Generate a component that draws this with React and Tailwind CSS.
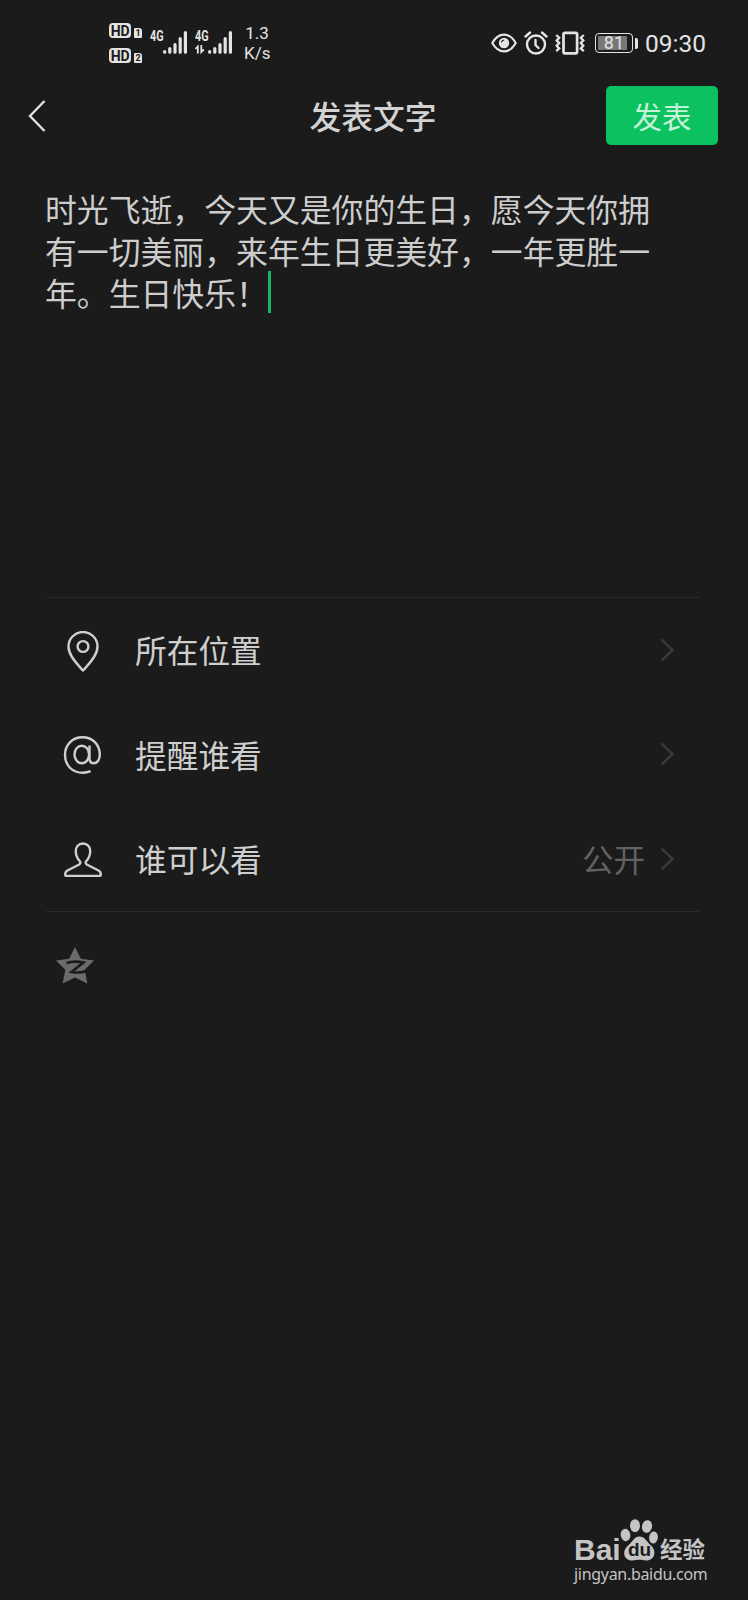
import React from 'react';
import clsx from 'clsx';

function HdBadge({ sim }) {
  return (
    <div className="flex h-[15px] items-end gap-[3px]">
      <span className="flex h-[15px] w-[22px] items-center justify-center rounded-[4px] bg-[#e4e4e4] text-[14px] font-bold leading-none tracking-[-0.3px] text-[#1b1b1b]">
        HD
      </span>
      <span className="flex h-[10px] w-[8px] items-center justify-center rounded-[1px] rounded-tr-[3px] bg-[#e4e4e4] text-[9px] font-bold leading-none text-[#1b1b1b]">
        {sim}
      </span>
    </div>
  );
}

function Signal({ data }) {
  return (
    <div className="relative h-[24px] w-[38px]">
      <svg viewBox="0 0 38 24" className="h-[24px] w-[38px]" fill="none" stroke="#e4e4e4" strokeWidth="3.2" strokeLinecap="round">
        <path d="M14.700 21.500v.7M19.800 18.500v3.700M25 14.500v7.700M30.200 8.500v13.700M35.400 2.500v19.700" />
        {data && (
          <path d="M.5 19l2.300-2.500v7M6.300 15v7l2.500-2.500" strokeWidth="1.800" strokeLinecap="butt" />
        )}
      </svg>
      <span className="absolute left-0 top-0 origin-left scale-x-[.72] text-[15px] font-bold leading-[12px] text-[#e4e4e4]">
        4G
      </span>
    </div>
  );
}

function StatusBar() {
  return (
    <div className="flex h-[86px] items-start justify-between pl-[109px] pr-[42px] font-[Roboto,sans-serif] text-[#e4e4e4]">
      <div className="flex items-start pt-[23px]">
        <div className="flex flex-col gap-[10px]">
          <HdBadge sim="1" />
          <HdBadge sim="2" />
        </div>
        <div className="ml-[8px] mt-[7px] flex gap-[7px]">
          <Signal />
          <Signal data />
        </div>
        <div className="ml-[11px] w-[26px] whitespace-nowrap text-center text-[17px] leading-[20px]">
          <div>1.3</div>
          <div>K/s</div>
        </div>
      </div>

      <div className="flex h-[22px] items-center mt-[32px]">
        <svg viewBox="0 0 26 20" className="h-[20px] w-[26px]" fill="none" stroke="#e4e4e4" strokeWidth="2.200">
          <path d="M1.300 10C4 5.200 8 1.600 13 1.600S22 5.200 24.700 10C22 14.800 18 18.400 13 18.400S4 14.800 1.300 10z" strokeLinejoin="round" />
          <circle cx="13" cy="10" r="5.200" fill="#e4e4e4" stroke="none" />
          <path d="M10.500 9.500a3 3 0 0 1 2.700-2.500" stroke="#1b1b1b" strokeWidth="1.200" />
        </svg>
        <svg viewBox="0 0 24 24" className="ml-[7px] h-[24px] w-[24px]" fill="none" stroke="#e4e4e4" strokeWidth="2.400" strokeLinecap="round">
          <circle cx="12" cy="13.500" r="9" />
          <path d="M1.500 5.500L6 1.500M18 1.500l4.500 4M11.500 9v5l3 3" />
        </svg>
        <svg viewBox="0 0 30 24" className="ml-[7px] h-[24px] w-[30px]" fill="none" stroke="#e4e4e4" strokeWidth="2.700">
          <rect x="8.500" y="1.900" width="13.600" height="20.400" rx="1.500" />
          <path d="M1.200 4l3 2.700-2.500 2.700 2.500 2.600-2.500 2.700 2.500 2.700-3 2.700M28.800 4l-3 2.700 2.500 2.700-2.500 2.600 2.500 2.700-2.500 2.700 3 2.700" strokeWidth="2.300" />
        </svg>
        <div className="ml-[10px] flex h-[20px] w-[38px] rounded-[4px] border-[1.500px] border-[#e4e4e4] p-[2px]">
          <div className="relative flex w-full items-center justify-center">
            <div className="absolute inset-y-0 left-0 w-[90%] bg-[#777777]" />
            <span className="relative text-[18px] leading-none">81</span>
          </div>
        </div>
        <div className="ml-[2px] h-[11px] w-[3px] rounded-r-[2px] bg-[#e4e4e4]" />
        <span className="ml-[7px] mt-[2px] text-[24.500px] leading-none">09:30</span>
      </div>
    </div>
  );
}

function Header() {
  return (
    <div className="flex h-[59px] items-center justify-between pl-[28px] pr-[30px]">
      <div className="w-[112px]">
        <svg viewBox="0 0 18 32" className="h-[32px] w-[18px]" fill="none" stroke="#e0e0e0" strokeWidth="2.400">
          <path d="M16.500 1L2 16l14.500 15" />
        </svg>
      </div>
      <h1 className="text-[31.800px] font-medium leading-none text-[#d2d2d2]">发表文字</h1>
      <button className="h-[59px] w-[112px] rounded-[5px] bg-[#0bc160] text-[29.500px] leading-none text-[#c4f3d8]">
        发表
      </button>
    </div>
  );
}

const icons = {
  pin: (
    <>
      <path d="M20 39.500C15 34 5.500 25 5.500 15.500a14.500 14.500 0 0 1 29 0C34.500 25 25 34 20 39.500z" />
      <circle cx="20" cy="15.500" r="5.400" />
    </>
  ),
  at: (
    <>
      <ellipse cx="18.800" cy="19.500" rx="7.300" ry="8.800" />
      <path d="M26.500 10.500v12.500c0 3.500 1.500 5.300 4.200 5.300 3.700 0 6.100-3.800 6.100-8.600C36.800 9.500 29.500 2.300 19.500 2.300 9.300 2.300 2 9.800 2 20s7.300 17.800 17.800 17.800c3 0 5.500-.5 7.800-1.600" />
    </>
  ),
  user: (
    <path d="M20 4.500c-4.600 0-7.200 3.300-7.200 8 0 3.700 1.500 7 4 9.700.9 1.200.7 2.600-.6 3.300L4.500 31.500c-2 1.100-2.300 2.300-2.300 4 0 .9.600 1.400 1.400 1.400h32.800c.8 0 1.400-.5 1.400-1.400 0-1.700-.3-2.900-2.300-4l-11.700-6c-1.300-.7-1.500-2.100-.6-3.300 2.500-2.700 4-6 4-9.700C27.200 7.800 24.600 4.500 20 4.500z" />
  ),
};

const rows = [
  { icon: 'pin', label: '所在位置' },
  { icon: 'at', label: '提醒谁看' },
  { icon: 'user', label: '谁可以看', value: '公开' },
];

function Row({ icon, label, value }) {
  return (
    <div className="flex flex-1 items-center pl-[17px] pr-[25px]">
      <svg viewBox="0 0 40 42" className="mt-[3px] h-[42px] w-[40px]" fill="none" stroke="#cfcfcf" strokeWidth="2.400" strokeLinejoin="round">
        {icons[icon]}
      </svg>
      <span className="ml-[32px] text-[31.700px] leading-none text-[#cfcfcf]">{label}</span>
      {value && <span className="ml-auto text-[31.500px] leading-none text-[#626262]">{value}</span>}
      <svg
        viewBox="0 0 14 24"
        className={clsx('h-[24px] w-[14px]', value ? 'ml-[15px]' : 'ml-auto')}
        fill="none"
        stroke="#3c3c3c"
        strokeWidth="2.400"
      >
        <path d="M1.500 1.500L12.500 12 1.500 22.500" />
      </svg>
    </div>
  );
}

function Watermark() {
  return (
    <div className="flex w-[134px] flex-col text-[#c4c4c4]">
      <div className="flex h-[41px] items-end">
        <span className="w-[46px] font-[Liberation_Sans,sans-serif] text-[30px] font-bold leading-[23px]">Bai</span>
        <div className="relative h-[42px] w-[38px]">
          <svg viewBox="0 0 38 42" className="h-[42px] w-[38px]" fill="#c4c4c4">
            <ellipse cx="5.500" cy="16" rx="4.800" ry="6.200" transform="rotate(-10 5.500 16)" />
            <ellipse cx="15" cy="6.700" rx="5" ry="6.500" />
            <ellipse cx="27" cy="7.500" rx="5" ry="6.400" transform="rotate(12 27 7.500)" />
            <ellipse cx="33.500" cy="18.500" rx="4.400" ry="6" transform="rotate(8 33.500 18.500)" />
            <path d="M19.500 17.500c5 0 7 4.500 10.500 8 3.500 3.200 5 6 4.300 9.500-.7 4.300-4 6.500-8 6.500-3 0-4.300-.7-6.800-.7s-4.300.7-7.300.7c-4.500 0-7.500-2.500-8-6.500-.4-3.500 1.500-6.500 5-9.500 3.800-3.500 5.300-8 10.300-8z" />
          </svg>
          <span className="absolute left-[8px] top-[23px] font-[Liberation_Sans,sans-serif] text-[19px] font-bold leading-[16px] text-[#1b1b1b]">
            du
          </span>
        </div>
        <span className="ml-[2px] whitespace-nowrap text-[22.500px] font-bold leading-[25px]">经验</span>
      </div>
      <span className="mt-px font-[Noto_Sans,sans-serif] text-[16px] leading-[24px] tracking-[-0.300px]">jingyan.baidu.com</span>
    </div>
  );
}

export default function App() {
  return (
    <div className="flex h-[1600px] w-[748px] flex-col bg-[#1b1b1b] font-[Noto_Sans_CJK_SC,sans-serif]">
      <StatusBar />
      <Header />

      <div className="h-[452px] pl-[45px] pt-[42px]">
        <p className="whitespace-nowrap text-[31.850px] leading-[42px] text-[#cdcdcd]">
          时光飞逝，今天又是你的生日，愿今天你拥
          <br />
          有一切美丽，来年生日更美好，一年更胜一
          <br />
          年。生日快乐！
          <span className="inline-block h-[42px] w-[3px] bg-[#14b866] align-top" />
        </p>
      </div>

      <div className="ml-[46px] mr-[49px] flex h-[315px] flex-col border-y border-[#2b2b2b]">
        {rows.map((row) => (
          <Row key={row.icon} {...row} />
        ))}
      </div>

      <svg viewBox="0 0 38 37" className="ml-[56px] mt-[35px] h-[37px] w-[38px]">
        <path
          d="M19 0l5.800 11.800L38 13.500l-9.300 9.200L31.300 36.500 19 30.500l-12.300 6 2.600-13.800L0 13.500l13.200-1.700z"
          fill="#6b6b6b"
        />
        <path d="M10.500 16c5-1.700 11.500-1.800 17-.5L15.500 25c5 .9 10.500.7 16-1.300" fill="none" stroke="#1b1b1b" strokeWidth="2.700" />
      </svg>

      <div className="mb-[14px] mr-[40px] mt-auto self-end">
        <Watermark />
      </div>
    </div>
  );
}
